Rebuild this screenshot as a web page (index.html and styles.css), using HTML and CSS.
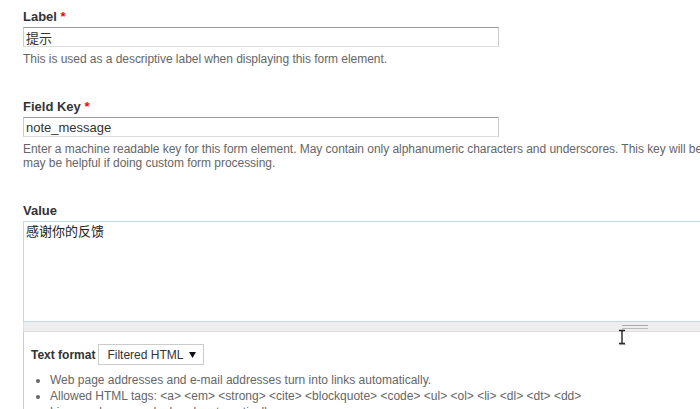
FILE: index.html
```html
<!DOCTYPE html>
<html lang="en">
<head>
    <meta charset="UTF-8">
    <meta name="viewport" content="width=device-width, initial-scale=1.0">
    <title>Edit component</title>
    <link rel="stylesheet" href="styles.css">
</head>
<body>
    <form class="component-form">
        <!-- Label -->
        <div class="form-item">
            <label class="form-label" for="edit-name">Label <span class="required">*</span></label>
            <input class="form-text" type="text" id="edit-name" value="提示">
            <div class="description">This is used as a descriptive label when displaying this form element.</div>
        </div>

        <!-- Field key -->
        <div class="form-item">
            <label class="form-label" for="edit-key">Field Key <span class="required">*</span></label>
            <input class="form-text" type="text" id="edit-key" value="note_message">
            <div class="description">Enter a machine readable key for this form element. May contain only alphanumeric characters and underscores. This key will be used as the name attribute of the form element. This value has no effect on the way data is saved, but<br>may be helpful if doing custom form processing.</div>
        </div>

        <!-- Value -->
        <div class="form-item form-item-last">
            <label class="form-label" for="edit-value">Value</label>
            <div class="resizable-textarea">
                <textarea id="edit-value" class="form-textarea">感谢你的反馈</textarea>
                <div class="grippie"><span class="grippie-handle"></span></div>
            </div>
            <fieldset class="filter-wrapper">
                <div class="filter-selector">
                    <span class="filter-label">Text format</span>
                    <div class="select-box">
                        <span>Filtered HTML</span>
                        <svg class="select-arrow" width="7" height="6" viewBox="0 0 7 6"><path d="M0 0H7L3.5 6Z" fill="#111"/></svg>
                    </div>
                </div>
                <ul class="filter-tips">
                    <li>Web page addresses and e-mail addresses turn into links automatically.</li>
                    <li>Allowed HTML tags: &lt;a&gt; &lt;em&gt; &lt;strong&gt; &lt;cite&gt; &lt;blockquote&gt; &lt;code&gt; &lt;ul&gt; &lt;ol&gt; &lt;li&gt; &lt;dl&gt; &lt;dt&gt; &lt;dd&gt;</li>
                    <li>Lines and paragraphs break automatically.</li>
                </ul>
            </fieldset>
        </div>
    </form>

    <!-- mouse pointer caught in the screenshot -->
    <svg class="text-cursor" width="10" height="17" viewBox="0 0 10 17">
        <path d="M2 1.5H8M5 1.5V14.5M2 14.5H8" stroke="#222" stroke-width="1.4" fill="none"/>
        <path d="M2.5 15.5H8.5" stroke="#999" stroke-width="1.2"/>
    </svg>
</body>
</html>
```

FILE: styles.css
```css
/* General Styling */
html, body {
    overflow: hidden;
}

body {
    margin: 0;
    padding: 0;
    background: #fff;
    color: #333;
    font-family: "Liberation Sans", Arial, "Noto Sans CJK SC", sans-serif;
    position: relative;
}

.component-form {
    width: 1260px;
    padding: 9px 0 0 23px;
}

/* Form items */
.form-item {
    margin-bottom: 33px;
}

.form-item-last {
    margin-bottom: 0;
}

.form-label {
    display: block;
    font-size: 13px;
    line-height: 16px;
    font-weight: bold;
    color: #333;
    margin-bottom: 2px;
}

.required {
    color: #f00;
}

.form-text {
    display: block;
    box-sizing: border-box;
    width: 476px;
    height: 20px;
    margin: 0;
    padding: 1px 2px;
    font-family: "Liberation Sans", Arial, "Noto Sans CJK SC", sans-serif;
    font-size: 13px;
    color: #333;
    border: 1px solid #ccc;
    border-top-color: #999;
    border-bottom-color: #ddd;
    outline: none;
}

.description {
    margin-top: 5px;
    font-size: 12px;
    line-height: 14px;
    color: #666;
    white-space: nowrap;
    letter-spacing: -0.04px;
}

/* Textarea */
.resizable-textarea {
    width: 1224px;
}

.form-textarea {
    display: block;
    box-sizing: border-box;
    width: 100%;
    height: 101px;
    margin: 0;
    padding: 2px;
    font-family: "Liberation Sans", Arial, "Noto Sans CJK SC", sans-serif;
    font-size: 13px;
    line-height: 16px;
    color: #222;
    border: 1px solid #c7d6e6;
    resize: none;
    outline: none;
}

.grippie {
    display: flex;
    justify-content: center;
    box-sizing: border-box;
    height: 10px;
    background: #eee;
    border: 1px solid #ddd;
    border-top: 0;
}

.grippie-handle {
    box-sizing: border-box;
    width: 26px;
    height: 4px;
    margin-top: 3px;
    border-top: 1px solid #aaa;
    border-bottom: 1px solid #bbb;
}

/* Text format */
.filter-wrapper {
    width: 1224px;
    box-sizing: border-box;
    margin: 0;
    padding: 12px 0 0 7px;
    border: 1px solid #ccc;
    border-top: 0;
    min-width: 0;
}

.filter-selector {
    display: flex;
    align-items: center;
}

.filter-label {
    font-size: 12px;
    font-weight: bold;
    color: #333;
    margin-right: 3px;
}

.select-box {
    display: flex;
    align-items: center;
    justify-content: space-between;
    box-sizing: border-box;
    width: 106px;
    height: 21px;
    padding: 0 7px 0 8px;
    border: 1px solid #ccc;
    font-size: 12px;
    color: #333;
}

.select-arrow {
    display: block;
}

.filter-tips {
    margin: 7px 0 0;
    padding: 0 0 0 19px;
    font-size: 12px;
    line-height: 16px;
    color: #666;
}

.text-cursor {
    position: absolute;
    left: 617px;
    top: 329px;
}
```
